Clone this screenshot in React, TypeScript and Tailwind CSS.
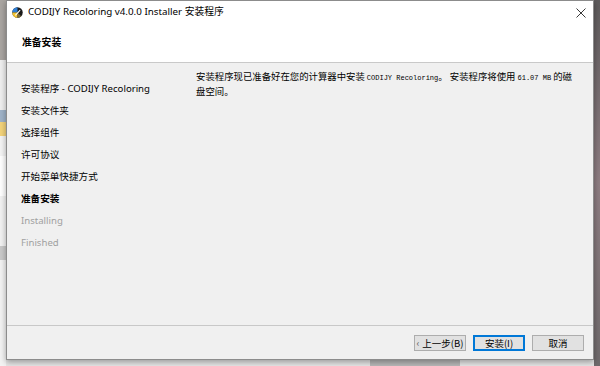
const ui = { fontFamily: '"Noto Sans", "Noto Sans CJK SC", sans-serif' };
const cjk = { fontFamily: '"Noto Sans CJK SC", "Noto Sans", sans-serif' };
const mono = { fontFamily: '"Liberation Mono", monospace' };

const steps = [
  { label: "安装程序 - CODIJY Recoloring", state: "done" },
  { label: "安装文件夹", state: "done" },
  { label: "选择组件", state: "done" },
  { label: "许可协议", state: "done" },
  { label: "开始菜单快捷方式", state: "done" },
  { label: "准备安装", state: "current" },
  { label: "Installing", state: "todo" },
  { label: "Finished", state: "todo" },
];

function AppIcon() {
  return (
    <svg width="11" height="11" viewBox="0 0 22 22">
      <circle cx="11" cy="11" r="10.5" fill="#1b1b1b" />
      <path d="M11 11 L11 0.5 A10.5 10.5 0 0 0 0.5 11 Z" fill="#2f7fd6" />
      <path d="M11 11 L0.5 11 A10.5 10.5 0 0 0 11 21.5 Z" fill="#f2c230" />
      <path d="M11 11 L11 21.5 A10.5 10.5 0 0 0 18.4 18.4 Z" fill="#7a6b3a" />
      <path d="M6 16 L15.5 5.5 L17 7 L7.5 17.5 Z" fill="#ffffff" />
    </svg>
  );
}

function Btn({ children, primary }: { children: React.ReactNode; primary?: boolean }) {
  return (
    <div
      className={
        "w-[52px] h-[16px] flex items-center justify-center gap-[3px] text-[9.5px] text-black bg-[#e1e1e1] " +
        (primary ? "border-2 border-[#0078d7]" : "border border-[#adadad]")
      }
      style={cjk}
    >
      {children}
    </div>
  );
}

export default function App() {
  return (
    <div className="w-[600px] h-[366px] relative overflow-hidden bg-[#e6e6e6]">
      {/* desktop behind the window */}
      <div className="absolute left-0 top-0 w-[6px] h-[366px] flex flex-col">
        <div className="h-[60px] bg-[#a9a5a1]" />
        <div className="h-[50px] bg-[#efefef]" />
        <div className="h-[12px] bg-[#9fb3c8]" />
        <div className="h-[14px] bg-[#f3d37a]" />
        <div className="h-[20px] bg-[#f4f4f4]" />
        <div className="h-[40px] bg-[#ffffff]" />
        <div className="h-[50px] bg-[#f2f2f2]" />
        <div className="h-[14px] bg-[#c9c9c9]" />
        <div className="flex-1 bg-[#f3f3f3]" />
      </div>
      <div className="absolute right-0 top-0 w-[6px] h-[366px] bg-gradient-to-b from-[#5f5c5d] via-[#8e7d82] to-[#6f6a6c]" />
      <div className="absolute left-[370px] top-[358px] w-[90px] h-[8px] bg-[#b8b8b8]" />

      {/* installer window */}
      <div className="absolute left-[6px] top-0 w-[588px] h-[360px] bg-white border border-[#8c8c8c] shadow-[0_2px_6px_rgba(0,0,0,0.35)] flex flex-col">
        <div className="h-[23px] flex items-center pl-[5px] pr-[6px] gap-[5px]">
          <AppIcon />
          <span className="text-[9.8px] text-black flex-1" style={ui}>
            CODIJY Recoloring v4.0.0 Installer 安装程序
          </span>
          <svg width="10" height="10" viewBox="0 0 10 10" className="mr-[1px]">
            <path d="M0.5 0.5 L9.5 9.5 M9.5 0.5 L0.5 9.5" stroke="#222" strokeWidth="0.9" />
          </svg>
        </div>
        <div className="h-[39px] border-b border-[#c9c9c9] pl-[15px] pt-[4px]">
          <span className="text-[9.8px] font-bold text-black" style={cjk}>
            准备安装
          </span>
        </div>

        <div className="flex-1 bg-[#f0f0f0] flex">
          <div className="w-[175px] pl-[14px] pt-[15px] flex flex-col">
            {steps.map((s) => (
              <div
                key={s.label}
                className={
                  "h-[22px] leading-[22px] text-[9.6px] " +
                  (s.state === "current"
                    ? "font-bold text-black"
                    : s.state === "todo"
                    ? "text-[#a0a0a0]"
                    : "text-black")
                }
                style={ui}
              >
                {s.label}
              </div>
            ))}
          </div>
          <div className="flex-1 pt-[7px] pl-[14px] pr-[12px] text-[9.4px] leading-[13px] text-black" style={cjk}>
            <div className="whitespace-nowrap">
              安装程序现已准备好在您的计算器中安装 <span className="text-[7px]" style={mono}>CODIJY Recoloring</span>。 安装程序将使用{" "}
              <span className="text-[7px]" style={mono}>61.07 MB</span> 的磁
            </div>
            <div>盘空间。</div>
          </div>
        </div>

        <div className="h-[34px] bg-[#f0f0f0] border-t border-[#c8c8c8] flex items-center justify-end gap-[7px] pr-[9px] pt-[1px]">
          <Btn>
            <span className="text-[#555]">‹</span>
            <span>上一步(B)</span>
          </Btn>
          <Btn primary>安装(I)</Btn>
          <Btn>取消</Btn>
        </div>
      </div>
    </div>
  );
}
